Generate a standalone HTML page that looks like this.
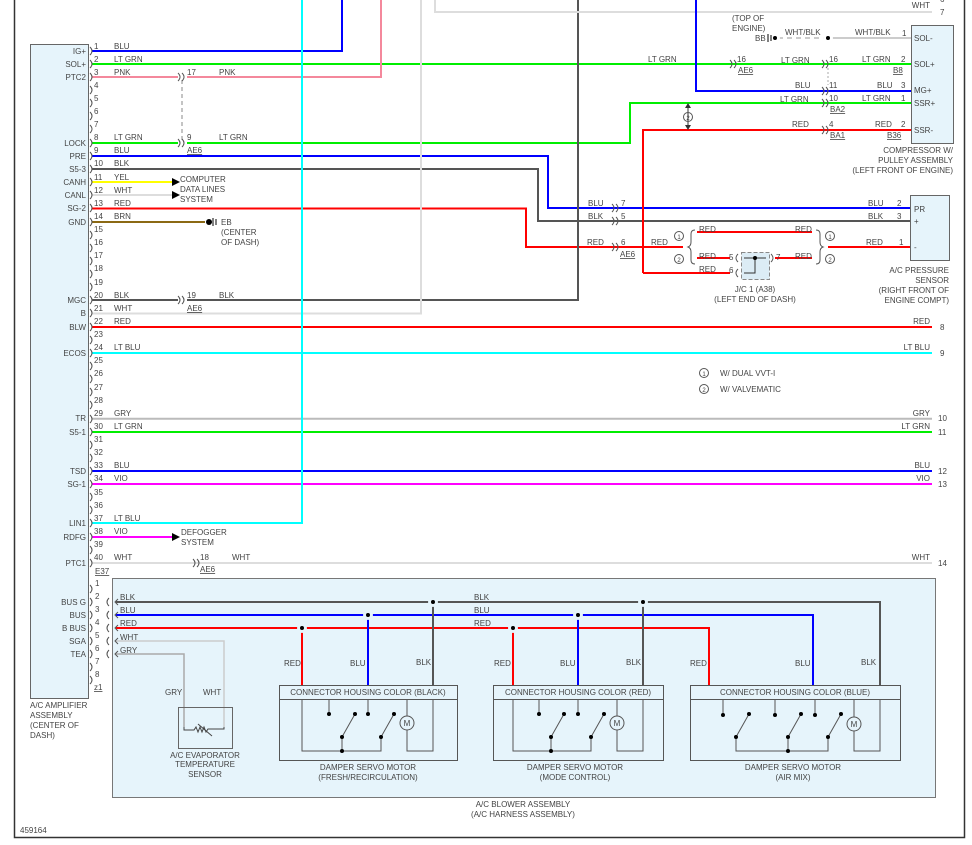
<!DOCTYPE html>
<html><head><meta charset="utf-8"><style>
html,body{margin:0;padding:0;background:#fff}
svg{display:block}
text{font-family:"Liberation Sans",sans-serif;font-size:8px;fill:#444}
.w{fill:none;stroke-width:2}
.t{fill:none;stroke:#555;stroke-width:1}
.r{text-anchor:end}
.m{text-anchor:middle}
.u{text-decoration:underline}
</style></head><body>
<svg width="972" height="845" viewBox="0 0 972 845" xmlns="http://www.w3.org/2000/svg">
<path d="M14.5 0V837.5H964.5V0" fill="none" stroke="#333" stroke-width="1.5"/>
<rect x="30.5" y="44.5" width="58" height="654" fill="#e6f4fb" stroke="#666"/>
<rect x="112.5" y="578.5" width="823" height="219" fill="#e6f4fb" stroke="#777"/>

<g class="w">
<path d="M92 51H342V0" stroke="#0000ff"/>
<path d="M92 64H918" stroke="#00ee00"/>
<path d="M92 77H178M187 77H381V0" stroke="#f4889c"/>
<path d="M92 143H178M187 143H630V103H918" stroke="#00ee00"/>
<path d="M92 156H548V208H918" stroke="#0000ff"/>
<path d="M92 169H538V221H918" stroke="#555"/>
<path d="M92 182H172" stroke="#ffff00"/>
<path d="M92 195H172" stroke="#ddd"/>
<path d="M92 208.5H526V247H683" stroke="#ff0000"/>
<path d="M92 222H205" stroke="#8b6914"/>
<path d="M92 300H178M187 300H578V0" stroke="#555"/>
<path d="M92 313.5H421V0" stroke="#ddd"/>
<path d="M92 327H932" stroke="#ff0000"/>
<path d="M92 353H932" stroke="#00ffff"/>
<path d="M92 418.7H932" stroke="#bbb"/>
<path d="M92 432H932" stroke="#00ee00"/>
<path d="M92 471H932" stroke="#0000ff"/>
<path d="M92 484H932" stroke="#ff00ff"/>
<path d="M92 523H302V0" stroke="#00ffff"/>
<path d="M92 537H172" stroke="#ff00ff"/>
<path d="M92 563H932" stroke="#ddd"/>
<path d="M435 0V12H932" stroke="#ddd"/>
<path d="M696 0V91H918" stroke="#0000ff"/>
<path d="M643 273V130H918" stroke="#ff0000"/>
<path d="M828 38H918" stroke="#ccc"/>
<path d="M778 38H828" stroke="#ccc" stroke-dasharray="5 4"/>
<path d="M828 247H918" stroke="#ff0000"/>
<path d="M697 232H812M697 258H730M775 258H812M643 273H730" stroke="#ff0000"/>
<path d="M116 602H880V685" stroke="#555"/>
<path d="M116 615H813V685" stroke="#0000ff"/>
<path d="M116 628H709V685" stroke="#ff0000"/>
<path d="M302 628V685M513 628V685" stroke="#ff0000"/>
<path d="M368 615V685M578 615V685" stroke="#0000ff"/>
<path d="M433 602V685M643 602V685" stroke="#555"/>
<path d="M116 641H224V727" stroke="#ccc" stroke-width="1.5"/>
<path d="M116 654H184V727" stroke="#aaa" stroke-width="1.5"/>
</g>
<path d="M182 80V141" stroke="#888" stroke-dasharray="4 3" fill="none"/>
<path d="M688 106V127" stroke="#333" fill="none"/>
<path d="M685 108L688 103L691 108ZM685 125L688 130L691 125Z" fill="#333"/>
<g fill="#000" stroke="#e6f4fb" stroke-width="3">
<circle cx="433" cy="602" r="3.5"/><circle cx="643" cy="602" r="3.5"/>
<circle cx="368" cy="615" r="3.5"/><circle cx="578" cy="615" r="3.5"/>
<circle cx="302" cy="628" r="3.5"/><circle cx="513" cy="628" r="3.5"/>
</g>
<g fill="#000" stroke="#fff" stroke-width="3">
<circle cx="828" cy="38" r="3.5"/><circle cx="775" cy="38" r="3.5"/>
</g>
<path d="M768 34V42M771 35V41" stroke="#000"/>
<path d="M209 222m-3 0a3 3 0 1 0 6 0a3 3 0 1 0 -6 0" fill="#000"/>
<path d="M213 218V226M216 219V225" stroke="#000"/>
<path d="M172 178L180 182L172 186ZM172 191L180 195L172 199ZM172 533L180 537L172 541Z" fill="#000"/>

<g stroke="#555" fill="none">
<path d="M90 47q4 4 0 8M90 60q4 4 0 8M90 73q4 4 0 8M90 86q4 4 0 8M90 99q4 4 0 8M90 112q4 4 0 8M90 125q4 4 0 8M90 139q4 4 0 8M90 152q4 4 0 8M90 165q4 4 0 8M90 178q4 4 0 8M90 191q4 4 0 8M90 204q4 4 0 8M90 218q4 4 0 8M90 231q4 4 0 8M90 244q4 4 0 8M90 257q4 4 0 8M90 270q4 4 0 8M90 283q4 4 0 8M90 296q4 4 0 8M90 309q4 4 0 8M90 323q4 4 0 8M90 336q4 4 0 8M90 349q4 4 0 8M90 362q4 4 0 8M90 375q4 4 0 8M90 388q4 4 0 8M90 401q4 4 0 8M90 415q4 4 0 8M90 428q4 4 0 8M90 441q4 4 0 8M90 454q4 4 0 8M90 467q4 4 0 8M90 480q4 4 0 8M90 493q4 4 0 8M90 506q4 4 0 8M90 519q4 4 0 8M90 533q4 4 0 8M90 546q4 4 0 8M90 559q4 4 0 8"/>
<path d="M90 585q4 4 0 8M90 598q4 4 0 8M90 611q4 4 0 8M90 624q4 4 0 8M90 637q4 4 0 8M90 650q4 4 0 8M90 663q4 4 0 8M90 676q4 4 0 8"/>
<path d="M109 598q-4 4 0 8M109 611q-4 4 0 8M109 624q-4 4 0 8M109 637q-4 4 0 8M109 650q-4 4 0 8"/>
<path d="M118 599l-3 3l3 3M118 612l-3 3l3 3M118 625l-3 3l3 3M118 638l-3 3l3 3M118 651l-3 3l3 3"/>
<path d="M178 73q4 4 0 8M182 73q4 4 0 8M178 139q4 4 0 8M182 139q4 4 0 8M178 296q4 4 0 8M182 296q4 4 0 8M193 559q4 4 0 8M197 559q4 4 0 8"/>
<path d="M730 60q4 4 0 8M734 60q4 4 0 8M822 60q4 4 0 8M826 60q4 4 0 8M822 87q4 4 0 8M826 87q4 4 0 8M822 99q4 4 0 8M826 99q4 4 0 8M822 126q4 4 0 8M826 126q4 4 0 8"/>
<path d="M612 204q4 4 0 8M616 204q4 4 0 8M612 217q4 4 0 8M616 217q4 4 0 8M612 243q4 4 0 8M616 243q4 4 0 8"/>
<path d="M918 34q-4 4 0 8M918 60q-4 4 0 8M918 87q-4 4 0 8M918 99q-4 4 0 8M918 126q-4 4 0 8M918 204q-4 4 0 8M918 217q-4 4 0 8M918 243q-4 4 0 8"/>
<path d="M738 254q-4 4 0 8M738 269q-4 4 0 8M771 254q4 4 0 8"/>
<path d="M695 230q-4 0 -4 4v8q0 4 -3 5q3 1 3 5v8q0 4 4 4"/>
<path d="M816 230q4 0 4 4v8q0 4 3 5q-3 1 -3 5v8q0 4 -4 4"/>
<circle cx="679" cy="236" r="4.5"/><circle cx="679" cy="259" r="4.5"/>
<circle cx="830" cy="236" r="4.5"/><circle cx="830" cy="259" r="4.5"/>
<circle cx="688" cy="117" r="4.5"/>
<circle cx="704" cy="373" r="4.5"/><circle cx="704" cy="389" r="4.5"/>
</g>
<path d="M828 68V85" stroke="#aaa" stroke-dasharray="2 2"/>
<text x="679" y="239" class="m" style="font-size:6px">1</text><text x="679" y="262" class="m" style="font-size:6px">2</text>
<text x="830" y="239" class="m" style="font-size:6px">1</text><text x="830" y="262" class="m" style="font-size:6px">2</text>
<text x="688" y="120" class="m" style="font-size:6px">2</text>
<text x="704" y="376" class="m" style="font-size:6px">1</text><text x="704" y="392" class="m" style="font-size:6px">2</text>
<rect x="741.5" y="252.5" width="28" height="27" fill="#dcecf5" stroke="#888" stroke-dasharray="4 2"/>
<path d="M744 258H766M755 258V273H744" stroke="#333" fill="none"/>
<circle cx="755" cy="258" r="2" fill="#000"/>

<rect x="911.5" y="25.5" width="42" height="118" fill="#e6f4fb" stroke="#666"/>
<rect x="910.5" y="195.5" width="39" height="65" fill="#e6f4fb" stroke="#666"/>

<g class="r">
<text x="86" y="54">IG+</text><text x="86" y="67">SOL+</text><text x="86" y="80">PTC2</text>
<text x="86" y="146">LOCK</text><text x="86" y="159">PRE</text><text x="86" y="172">S5-3</text>
<text x="86" y="185">CANH</text><text x="86" y="198">CANL</text><text x="86" y="211">SG-2</text>
<text x="86" y="225">GND</text><text x="86" y="303">MGC</text><text x="86" y="316">B</text>
<text x="86" y="330">BLW</text><text x="86" y="356">ECOS</text><text x="86" y="421">TR</text>
<text x="86" y="435">S5-1</text><text x="86" y="474">TSD</text><text x="86" y="487">SG-1</text>
<text x="86" y="526">LIN1</text><text x="86" y="540">RDFG</text><text x="86" y="566">PTC1</text>
<text x="86" y="605">BUS G</text><text x="86" y="618">BUS</text><text x="86" y="631">B BUS</text>
<text x="86" y="644">SGA</text><text x="86" y="657">TEA</text>
</g>
<g style="font-size:7.5px">
<text x="94" y="49">1</text><text x="94" y="62">2</text><text x="94" y="75">3</text><text x="94" y="88">4</text><text x="94" y="101">5</text><text x="94" y="114">6</text><text x="94" y="127">7</text><text x="94" y="140">8</text><text x="94" y="153">9</text><text x="94" y="166">10</text><text x="94" y="180">11</text><text x="94" y="193">12</text><text x="94" y="206">13</text><text x="94" y="219">14</text><text x="94" y="232">15</text><text x="94" y="245">16</text><text x="94" y="258">17</text><text x="94" y="271">18</text><text x="94" y="285">19</text><text x="94" y="298">20</text><text x="94" y="311">21</text><text x="94" y="324">22</text><text x="94" y="337">23</text><text x="94" y="350">24</text><text x="94" y="363">25</text><text x="94" y="376">26</text><text x="94" y="390">27</text><text x="94" y="403">28</text><text x="94" y="416">29</text><text x="94" y="429">30</text><text x="94" y="442">31</text><text x="94" y="455">32</text><text x="94" y="468">33</text><text x="94" y="481">34</text><text x="94" y="495">35</text><text x="94" y="508">36</text><text x="94" y="521">37</text><text x="94" y="534">38</text><text x="94" y="547">39</text><text x="94" y="560">40</text>
<text x="95" y="586">1</text><text x="95" y="599">2</text><text x="95" y="612">3</text><text x="95" y="625">4</text><text x="95" y="638">5</text><text x="95" y="651">6</text><text x="95" y="664">7</text><text x="95" y="677">8</text>
</g>
<text x="95" y="574" class="u">E37</text><text x="94" y="690" class="u">z1</text>
<text x="114" y="49">BLU</text><text x="114" y="62">LT GRN</text><text x="114" y="75">PNK</text>
<text x="114" y="140">LT GRN</text><text x="114" y="153">BLU</text><text x="114" y="166">BLK</text>
<text x="114" y="180">YEL</text><text x="114" y="193">WHT</text><text x="114" y="206">RED</text>
<text x="114" y="219">BRN</text><text x="114" y="298">BLK</text><text x="114" y="311">WHT</text>
<text x="114" y="324">RED</text><text x="114" y="350">LT BLU</text><text x="114" y="416">GRY</text>
<text x="114" y="429">LT GRN</text><text x="114" y="468">BLU</text><text x="114" y="481">VIO</text>
<text x="114" y="521">LT BLU</text><text x="114" y="534">VIO</text><text x="114" y="560">WHT</text>
<text x="187" y="75">17</text><text x="219" y="75">PNK</text>
<text x="187" y="140">9</text><text x="219" y="140">LT GRN</text><text x="187" y="153" class="u">AE6</text>
<text x="187" y="298">19</text><text x="219" y="298">BLK</text><text x="187" y="311" class="u">AE6</text>
<text x="200" y="560">18</text><text x="232" y="560">WHT</text><text x="200" y="572" class="u">AE6</text>
<text x="180" y="182">COMPUTER</text><text x="180" y="192">DATA LINES</text><text x="180" y="202">SYSTEM</text>
<text x="221" y="225">EB</text><text x="221" y="235">(CENTER</text><text x="221" y="245">OF DASH)</text>
<text x="181" y="535">DEFOGGER</text><text x="181" y="545">SYSTEM</text>
<g class="r">
<text x="930" y="8">WHT</text><text x="930" y="324">RED</text><text x="930" y="350">LT BLU</text>
<text x="930" y="416">GRY</text><text x="930" y="429">LT GRN</text><text x="930" y="468">BLU</text>
<text x="930" y="481">VIO</text><text x="930" y="560">WHT</text>
</g>
<text x="940" y="2">6</text><text x="940" y="15">7</text><text x="940" y="330">8</text><text x="940" y="356">9</text>
<text x="938" y="421">10</text><text x="938" y="435">11</text><text x="938" y="474">12</text><text x="938" y="487">13</text><text x="938" y="566">14</text>
<text x="732" y="21">(TOP OF</text><text x="732" y="31">ENGINE)</text><text x="755" y="41">BB</text>
<text x="785" y="35">WHT/BLK</text><text x="855" y="35">WHT/BLK</text><text x="902" y="36">1</text>
<text x="648" y="62">LT GRN</text><text x="737" y="62">16</text><text x="738" y="73" class="u">AE6</text>
<text x="781" y="63">LT GRN</text><text x="829" y="62">16</text><text x="862" y="62">LT GRN</text><text x="901" y="62">2</text><text x="893" y="73" class="u">B8</text>
<text x="795" y="88">BLU</text><text x="829" y="88">11</text><text x="877" y="88">BLU</text><text x="901" y="88">3</text>
<text x="780" y="102">LT GRN</text><text x="829" y="101">10</text><text x="862" y="101">LT GRN</text><text x="901" y="101">1</text><text x="830" y="112" class="u">BA2</text>
<text x="792" y="127">RED</text><text x="829" y="127">4</text><text x="875" y="127">RED</text><text x="901" y="127">2</text><text x="830" y="138" class="u">BA1</text><text x="887" y="138" class="u">B36</text>
<text x="914" y="41">SOL-</text><text x="914" y="67">SOL+</text><text x="914" y="93">MG+</text><text x="914" y="106">SSR+</text><text x="914" y="133">SSR-</text>
<g class="r"><text x="953" y="153">COMPRESSOR W/</text><text x="953" y="163">PULLEY ASSEMBLY</text><text x="953" y="173">(LEFT FRONT OF ENGINE)</text>
<text x="949" y="273">A/C PRESSURE</text><text x="949" y="283">SENSOR</text><text x="949" y="293">(RIGHT FRONT OF</text><text x="949" y="303">ENGINE COMPT)</text></g>
<text x="914" y="212">PR</text><text x="914" y="224">+</text><text x="914" y="250">-</text>
<text x="868" y="206">BLU</text><text x="868" y="219">BLK</text><text x="866" y="245">RED</text>
<text x="897" y="206">2</text><text x="897" y="219">3</text><text x="899" y="245">1</text>
<text x="588" y="206">BLU</text><text x="588" y="219">BLK</text><text x="587" y="245">RED</text>
<text x="621" y="206">7</text><text x="621" y="219">5</text><text x="621" y="245">6</text><text x="620" y="257" class="u">AE6</text>
<text x="651" y="245">RED</text>
<text x="699" y="232">RED</text><text x="795" y="232">RED</text><text x="699" y="259">RED</text><text x="795" y="259">RED</text><text x="699" y="272">RED</text>
<text x="729" y="260">5</text><text x="729" y="273">6</text><text x="776" y="260">7</text>
<text x="755" y="292" class="m">J/C 1 (A38)</text><text x="755" y="302" class="m">(LEFT END OF DASH)</text>
<text x="720" y="376">W/ DUAL VVT-I</text><text x="720" y="392">W/ VALVEMATIC</text>
<text x="120" y="600">BLK</text><text x="120" y="613">BLU</text><text x="120" y="626">RED</text><text x="120" y="640">WHT</text><text x="120" y="653">GRY</text>
<text x="474" y="600">BLK</text><text x="474" y="613">BLU</text><text x="474" y="626">RED</text>
<text x="284" y="666">RED</text><text x="350" y="666">BLU</text><text x="416" y="665">BLK</text>
<text x="494" y="666">RED</text><text x="560" y="666">BLU</text><text x="626" y="665">BLK</text>
<text x="690" y="666">RED</text><text x="795" y="666">BLU</text><text x="861" y="665">BLK</text>
<text x="30" y="708">A/C AMPLIFIER</text><text x="30" y="718">ASSEMBLY</text><text x="30" y="728">(CENTER OF</text><text x="30" y="738">DASH)</text>
<text x="165" y="695">GRY</text><text x="203" y="695">WHT</text>
<rect x="178.5" y="707.5" width="54" height="41" fill="none" stroke="#666"/>
<path d="M184 727V730H194l2-3l2 5l2-5l2 5l2-5l2 5l2-3H224V727" fill="none" stroke="#444"/>
<path d="M198 724L212 736" stroke="#444"/>
<text x="205" y="758" class="m">A/C EVAPORATOR</text><text x="205" y="767" class="m">TEMPERATURE</text><text x="205" y="777" class="m">SENSOR</text>
<g fill="none" stroke="#555">
<rect x="279.5" y="685.5" width="178" height="75"/><path d="M279.5 699.5H457.5"/>
<path d="M302 699V751H381V737M342 751V737L355 714M381 737L394 714M329 699V713M368 699V713M407 699V751H433V699"/>
<rect x="493.5" y="685.5" width="170" height="75"/><path d="M493.5 699.5H663.5"/>
<path d="M513 699V751H591V737M551 751V737L564 714M591 737L604 714M539 699V713M578 699V713M617 699V751H643V699"/>
<rect x="690.5" y="685.5" width="210" height="75"/><path d="M690.5 699.5H900.5"/>
<path d="M736 737V751H828V737M736 737L749 714M788 751V737L801 714M828 737L841 714M815 699V715M854 699V751H880V699M723 699V715M775 699V715"/>
</g>
<g fill="#e6f4fb" stroke="#555"><circle cx="407" cy="723" r="7"/><circle cx="617" cy="723" r="7"/><circle cx="854" cy="724" r="7"/></g>
<text x="407" y="726" class="m">M</text><text x="617" y="726" class="m">M</text><text x="854" y="727" class="m">M</text>
<g fill="#000">
<circle cx="329" cy="714" r="2"/><circle cx="368" cy="714" r="2"/><circle cx="355" cy="714" r="2"/><circle cx="394" cy="714" r="2"/><circle cx="342" cy="737" r="2"/><circle cx="381" cy="737" r="2"/><circle cx="342" cy="751" r="2"/>
<circle cx="539" cy="714" r="2"/><circle cx="578" cy="714" r="2"/><circle cx="564" cy="714" r="2"/><circle cx="604" cy="714" r="2"/><circle cx="551" cy="737" r="2"/><circle cx="591" cy="737" r="2"/><circle cx="551" cy="751" r="2"/>
<circle cx="723" cy="715" r="2"/><circle cx="775" cy="715" r="2"/><circle cx="815" cy="715" r="2"/><circle cx="749" cy="714" r="2"/><circle cx="801" cy="714" r="2"/><circle cx="841" cy="714" r="2"/><circle cx="736" cy="737" r="2"/><circle cx="788" cy="737" r="2"/><circle cx="828" cy="737" r="2"/><circle cx="788" cy="751" r="2"/>
</g>
<text x="368" y="695" class="m">CONNECTOR HOUSING COLOR (BLACK)</text>
<text x="578" y="695" class="m">CONNECTOR HOUSING COLOR (RED)</text>
<text x="795" y="695" class="m">CONNECTOR HOUSING COLOR (BLUE)</text>
<text x="368" y="770" class="m">DAMPER SERVO MOTOR</text><text x="368" y="780" class="m">(FRESH/RECIRCULATION)</text>
<text x="575" y="770" class="m">DAMPER SERVO MOTOR</text><text x="575" y="780" class="m">(MODE CONTROL)</text>
<text x="793" y="770" class="m">DAMPER SERVO MOTOR</text><text x="793" y="780" class="m">(AIR MIX)</text>
<text x="523" y="807" class="m">A/C BLOWER ASSEMBLY</text><text x="523" y="817" class="m">(A/C HARNESS ASSEMBLY)</text>
<text x="20" y="833">459164</text>
</svg>
</body></html>
